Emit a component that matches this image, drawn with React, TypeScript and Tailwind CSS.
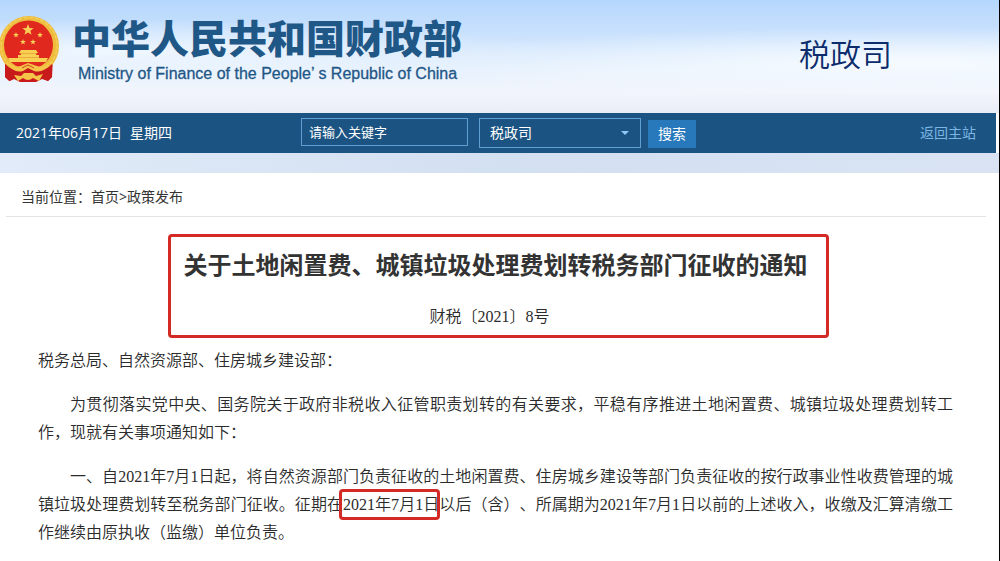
import type { ReactNode } from "react";

const SANS = "font-['Open_Sans','Noto_Sans_CJK_SC',sans-serif]";
const SONG = "font-['Liberation_Serif','Noto_Sans_CJK_SC',serif] font-[350]";

const STARS = [
  { x: 28, y: 14, r: 6 },
  { x: 16, y: 19, r: 3 },
  { x: 40, y: 19, r: 3 },
  { x: 23, y: 26, r: 3 },
  { x: 33, y: 26, r: 3 },
];

function starPoints(cx: number, cy: number, r: number) {
  return Array.from({ length: 10 }, (_, i) => {
    const radius = i % 2 === 0 ? r : r * 0.42;
    const angle = (Math.PI / 5) * i - Math.PI / 2;
    return `${cx + radius * Math.cos(angle)},${cy + radius * Math.sin(angle)}`;
  }).join(" ");
}

function Emblem() {
  return (
    <svg viewBox="0 0 60 66" className="h-[66px] w-[60px] shrink-0" role="img" aria-label="国徽">
      <path d="M5 42L53 42L52 61L48 65L42 63L36 66L20 66L14 63L9 65L5 61Z" fill="#c8191b" />
      <ellipse cx="29" cy="30" rx="30" ry="30" fill="#eebd3d" />
      <ellipse cx="29" cy="29.500" rx="28" ry="28" fill="none" stroke="#f5cd58" strokeWidth="1.500" strokeDasharray="4 1.500" />
      <circle cx="28.500" cy="29" r="24.500" fill="#e0281f" />
      {STARS.map((s) => (
        <polygon key={`${s.x}-${s.y}`} points={starPoints(s.x, s.y, s.r)} fill="#f8cf57" />
      ))}
      <path d="M19 37L21 34H36L38 37H36V39H39V42H48L46 46H10L8 42H18V39H21V37Z" fill="#f8d052" />
      <path d="M20 37.500H37M18 41.500H39" stroke="#e59a35" strokeWidth="0.700" />
      <path d="M5 48Q16 58 24 53L29 50L34 53Q42 58 52 48V61L48 65L40 61L34 63Q29 66 24 63L17 61L10 65L5 61Z" fill="#c8191b" />
      <path d="M7 46Q17 53 23 49L28 47L34 49Q41 53 50 46Q44 58 34 55L28 52L23 55Q13 58 7 46Z" fill="#f4c548" />
      <path d="M14 59L21 60L24 57H33L36 60L43 58L39 65L33 62Q28 66 23 62L18 65Z" fill="#f4c548" />
      <path d="M22 52L28 49L34 52" stroke="#c8191b" strokeWidth="0.800" fill="none" />
    </svg>
  );
}

function Header() {
  return (
    <header className="flex h-[113px] items-start justify-between bg-[radial-gradient(ellipse_at_92%_55%,rgba(248,252,255,0.9),transparent_40%),radial-gradient(ellipse_at_12%_45%,rgba(245,250,255,0.8),transparent_35%),linear-gradient(to_bottom,#b5d7fd_0%,#cde3fd_35%,#e6f1fd_62%,#f3f5fc_82%,#e9edf7_100%)]">
      <div className="flex pt-4">
        <Emblem />
        <div className="pl-3 text-[#1f5787]">
          <div className={`${SANS} text-[39px] leading-[44px] font-black`}>中华人民共和国财政部</div>
          <div className="mt-[6px] pl-[6px] font-['Liberation_Sans',sans-serif] text-base leading-4 [-webkit-text-stroke:0.3px]">
            Ministry of Finance of the People’ s Republic of China
          </div>
        </div>
      </div>
      <div className={`${SANS} pt-8 pr-[107px] text-[31px] leading-[44px] font-[350] text-[#0c2c6c]`}>税政司</div>
    </header>
  );
}

function SearchBar() {
  return (
    <div className="flex h-10 items-center bg-[#1b5482] pr-5 pl-4 text-sm text-white">
      <div className="flex w-[285px] shrink-0 gap-2">
        <span>2021年06月17日</span>
        <span>星期四</span>
      </div>
      <form className="flex h-[30px]" onSubmit={(e) => e.preventDefault()}>
        <input
          type="text"
          aria-label="请输入关键字"
          placeholder="请输入关键字"
          className="h-7 w-[167px] border border-[#5f9fd2] bg-transparent px-[7px] text-[13px] text-white placeholder:text-white"
        />
        <div className="relative ml-[11px]">
          <select
            aria-label="栏目"
            className="h-[30px] w-[162px] appearance-none border border-[#5f9fd2] bg-[#1b5482] pl-[10px] text-sm text-white"
          >
            <option>税政司</option>
          </select>
          <svg viewBox="0 0 8 4" className="pointer-events-none absolute top-[13px] right-3 h-1 w-2">
            <path d="M0 0H8L4 4Z" fill="#8cc8f8" />
          </svg>
        </div>
        <button type="submit" className="ml-[7px] h-7 w-12 self-end bg-[#2779bb] text-sm text-white">
          搜索
        </button>
      </form>
      <a href="#" className="ml-auto text-[#7db5e3]">
        返回主站
      </a>
    </div>
  );
}

function Marked({ children }: { children: ReactNode }) {
  return (
    <span className="relative whitespace-nowrap">
      {children}
      <span className="absolute -inset-y-[7px] -right-px -left-1 rounded-sm border-3 border-[#d42a25]" />
    </span>
  );
}

function Article() {
  return (
    <article className="pt-[17px] text-[#2b2b2b]">
      <div className="mx-auto w-full max-w-[661px] rounded-sm border-3 border-[#d42a25] pt-2 pr-[18px] pb-1 pl-[13px] text-center">
        <h1 className="text-2xl leading-10 font-bold whitespace-nowrap text-[#333]">
          关于土地闲置费、城镇垃圾处理费划转税务部门征收的通知
        </h1>
        <p className={`${SONG} mt-[18px] pr-3 text-base leading-7`}>财税〔2021〕8号</p>
      </div>
      <div className={`${SONG} space-y-4 pt-[9px] pr-[43px] pl-[38px] text-justify text-base leading-7`}>
        <p>税务总局、自然资源部、住房城乡建设部：</p>
        <p className="indent-8">
          为贯彻落实党中央、国务院关于政府非税收入征管职责划转的有关要求，平稳有序推进土地闲置费、城镇垃圾处理费划转工作，现就有关事项通知如下：
        </p>
        <p className="indent-8">
          一、自2021年7月1日起，将自然资源部门负责征收的土地闲置费、住房城乡建设等部门负责征收的按行政事业性收费管理的城镇垃圾处理费划转至税务部门征收。征期在
          <Marked>2021年7月1日</Marked>
          以后（含）、所属期为2021年7月1日以前的上述收入，收缴及汇算清缴工作继续由原执收（监缴）单位负责。
        </p>
      </div>
    </article>
  );
}

export default function App() {
  return (
    <div lang="zh-CN" className={`${SANS} min-h-screen border-r border-black bg-[#fdfdfe] [text-spacing-trim:space-all]`}>
      <Header />
      <div className="mr-[3px]">
        <SearchBar />
      </div>
      <div className="h-5 bg-linear-to-r from-[#e1ebf9] via-[#d3e0f1] to-[#d9e3f4]" />
      <main className="mr-[3px] bg-white pb-4">
        <nav className="mr-[10px] ml-[6px] flex h-11 items-center border-b border-[#e4e4e4] pt-[5px] pl-[15px] text-sm text-[#333]">
          <span>当前位置：</span>
          <a href="#">首页</a>
          <span>&gt;</span>
          <a href="#">政策发布</a>
        </nav>
        <Article />
      </main>
    </div>
  );
}
